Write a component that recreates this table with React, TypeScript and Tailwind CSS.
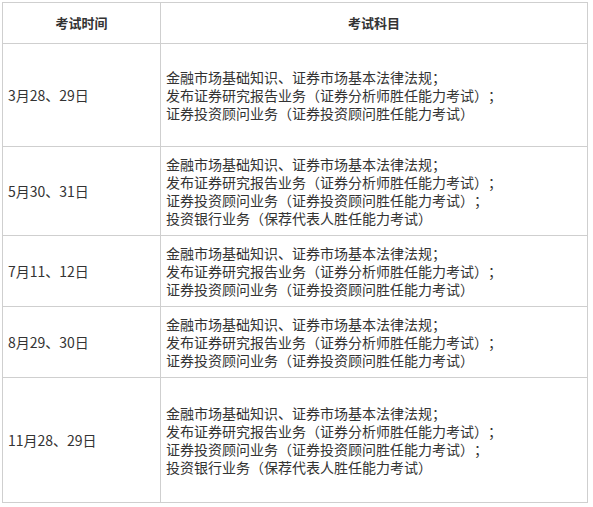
const rows: { date: string; h: number; lines: string[] }[] = [
  {
    date: "3月28、29日",
    h: 103,
    lines: [
      "金融市场基础知识、证券市场基本法律法规；",
      "发布证券研究报告业务（证券分析师胜任能力考试）；",
      "证券投资顾问业务（证券投资顾问胜任能力考试）",
    ],
  },
  {
    date: "5月30、31日",
    h: 89,
    lines: [
      "金融市场基础知识、证券市场基本法律法规；",
      "发布证券研究报告业务（证券分析师胜任能力考试）；",
      "证券投资顾问业务（证券投资顾问胜任能力考试）；",
      "投资银行业务（保荐代表人胜任能力考试）",
    ],
  },
  {
    date: "7月11、12日",
    h: 71,
    lines: [
      "金融市场基础知识、证券市场基本法律法规；",
      "发布证券研究报告业务（证券分析师胜任能力考试）；",
      "证券投资顾问业务（证券投资顾问胜任能力考试）",
    ],
  },
  {
    date: "8月29、30日",
    h: 71,
    lines: [
      "金融市场基础知识、证券市场基本法律法规；",
      "发布证券研究报告业务（证券分析师胜任能力考试）；",
      "证券投资顾问业务（证券投资顾问胜任能力考试）",
    ],
  },
  {
    date: "11月28、29日",
    h: 125,
    lines: [
      "金融市场基础知识、证券市场基本法律法规；",
      "发布证券研究报告业务（证券分析师胜任能力考试）；",
      "证券投资顾问业务（证券投资顾问胜任能力考试）；",
      "投资银行业务（保荐代表人胜任能力考试）",
    ],
  },
];

export default function App() {
  return (
    <div className="w-[593px] h-[507px] bg-white pl-[2px] pt-[2px] font-['Microsoft_YaHei','Noto_Sans_CJK_SC',sans-serif] text-[14px] leading-[18px] text-[#333] [text-spacing-trim:space-all]">
      <table className="w-[586px] border-collapse table-fixed">
        <colgroup>
          <col className="w-[158px]" />
          <col />
        </colgroup>
        <thead>
          <tr className="h-[41px]">
            <th className="border border-[#cfcfcf] text-center font-bold text-[13px]">考试时间</th>
            <th className="border border-[#cfcfcf] text-center font-bold text-[13px]">考试科目</th>
          </tr>
        </thead>
        <tbody>
          {rows.map((r) => (
            <tr key={r.date} style={{ height: r.h }}>
              <td className="border border-[#cfcfcf] pl-[5px] align-middle">{r.date}</td>
              <td className="border border-[#cfcfcf] pl-[5px] align-middle">
                {r.lines.map((l) => (
                  <div key={l}>{l}</div>
                ))}
              </td>
            </tr>
          ))}
        </tbody>
      </table>
    </div>
  );
}
